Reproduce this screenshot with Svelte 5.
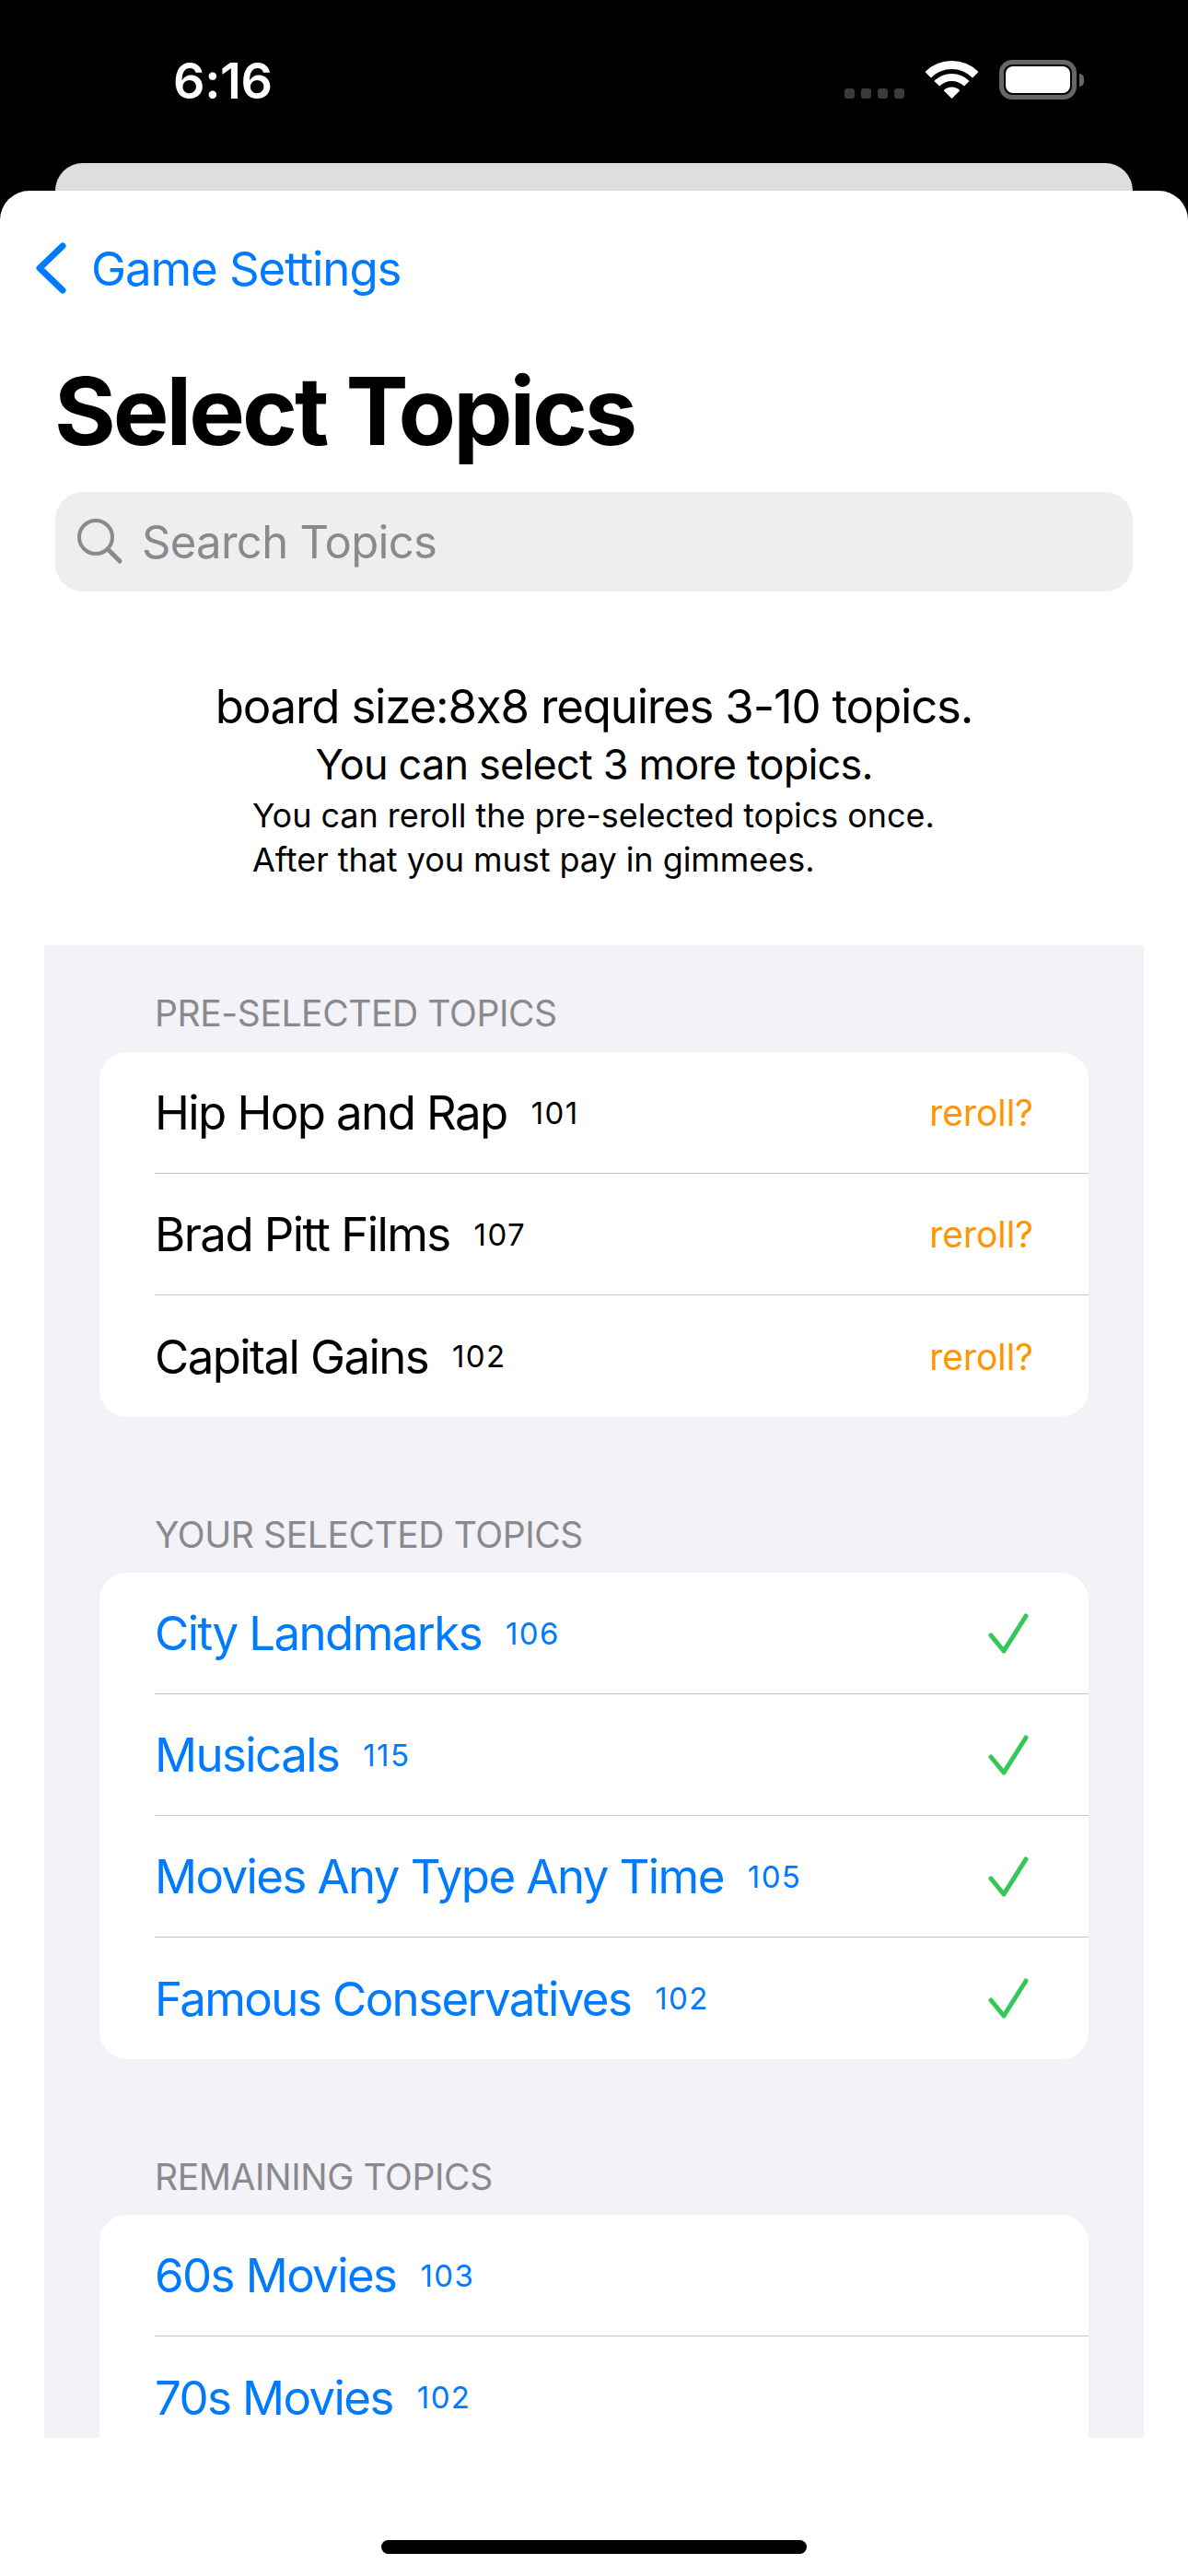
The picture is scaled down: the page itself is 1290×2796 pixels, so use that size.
<script>
  const preselected = [
    { name: 'Hip Hop and Rap', count: 101 },
    { name: 'Brad Pitt Films', count: 107 },
    { name: 'Capital Gains', count: 102 }
  ]
  const selected = [
    { name: 'City Landmarks', count: 106 },
    { name: 'Musicals', count: 115 },
    { name: 'Movies Any Type Any Time', count: 105 },
    { name: 'Famous Conservatives', count: 102 }
  ]
  const remaining = [
    { name: '60s Movies', count: 103 },
    { name: '70s Movies', count: 102 }
  ]
</script>

<div class="phone">
  <div class="status">
    <span class="time">6:16</span>
    <div class="status-icons">
      <div class="dots">
        <i></i><i></i><i></i><i></i>
      </div>
      <svg class="wifi" width="57" height="41" viewBox="0 0 57 41">
        <path fill="#fff" d="M-0.5 12 A41 41 0 0 1 57.5 12 L51.1 18.4 A32 32 0 0 0 5.9 18.4 Z" />
        <path fill="#fff" d="M9.4 21.9 A27 27 0 0 1 47.6 21.9 L41.9 27.6 A19 19 0 0 0 15.1 27.6 Z" />
        <path fill="#fff" d="M19.7 32.2 A12.5 12.5 0 0 1 37.3 32.2 L28.5 41 Z" />
      </svg>
      <div class="battery">
        <div class="battery-body"><div class="battery-fill"></div></div>
        <div class="battery-cap"></div>
      </div>
    </div>
  </div>

  <div class="back-sheet"></div>

  <div class="sheet">
    <nav class="nav">
      <svg width="33" height="56" viewBox="0 0 33 56">
        <path d="M29 4 L4 28 L29 52" fill="none" stroke="#007aff" stroke-width="7" stroke-linecap="round" stroke-linejoin="round" />
      </svg>
      <span>Game Settings</span>
    </nav>

    <h1>Select Topics</h1>

    <div class="search">
      <svg width="50" height="50" viewBox="0 0 50 50">
        <circle cx="20" cy="20" r="18" fill="none" stroke="#8a8a8e" stroke-width="4" />
        <path d="M33 33 L46 46" stroke="#8a8a8e" stroke-width="5" stroke-linecap="round" />
      </svg>
      <span>Search Topics</span>
    </div>

    <div class="intro">
      <p class="line-1">board size:8x8 requires 3-10 topics.</p>
      <p class="line-2">You can select 3 more topics.</p>
      <div class="small">
        <p>You can reroll the pre-selected topics once.</p>
        <p>After that you must pay in gimmees.</p>
      </div>
    </div>

    <div class="panel">
      <section>
        <h2>PRE-SELECTED TOPICS</h2>
        <ul class="card">
          {#each preselected as topic}
            <li>
              <span class="name">{topic.name}</span>
              <span class="count">{topic.count}</span>
              <span class="reroll">reroll?</span>
            </li>
          {/each}
        </ul>
      </section>

      <section>
        <h2>YOUR SELECTED TOPICS</h2>
        <ul class="card blue">
          {#each selected as topic}
            <li>
              <span class="name">{topic.name}</span>
              <span class="count">{topic.count}</span>
              <svg class="check" width="44" height="44" viewBox="0 0 44 44">
                <path d="M3 24 L17 41 L41 3" fill="none" stroke="#34c759" stroke-width="5" stroke-linecap="round" stroke-linejoin="round" />
              </svg>
            </li>
          {/each}
        </ul>
      </section>

      <section>
        <h2>REMAINING TOPICS</h2>
        <ul class="card blue">
          {#each remaining as topic}
            <li>
              <span class="name">{topic.name}</span>
              <span class="count">{topic.count}</span>
            </li>
          {/each}
        </ul>
      </section>
    </div>

    <div class="home-area">
      <div class="home-bar"></div>
    </div>
  </div>
</div>

<style>
  :global(body) {
    margin: 0;
    background: #000;
  }

  .phone {
    width: 1290px;
    height: 2796px;
    overflow: hidden;
    background: #000;
    font-family: 'Inter', 'Liberation Sans', sans-serif;
    color: #000;
    display: flex;
    flex-direction: column;
  }

  .status {
    height: 177px;
    flex: none;
    display: flex;
    justify-content: space-between;
    padding: 61px 113px 0 188px;
    box-sizing: border-box;
  }

  .time {
    color: #fff;
    font-size: 54px;
    font-weight: 600;
    line-height: 54px;
    letter-spacing: -0.4px;
  }

  .status-icons {
    display: flex;
    align-items: flex-end;
    height: 47px;
    padding-top: 5px;
    box-sizing: border-box;
  }

  .dots {
    display: flex;
    gap: 7px;
    margin-right: 23px;
    margin-bottom: 1px;
  }

  .dots i {
    width: 11px;
    height: 11px;
    border-radius: 3px;
    background: #3a3a3a;
  }

  .wifi {
    margin-right: 23px;
    margin-bottom: 1px;
    overflow: visible;
  }

  .battery {
    display: flex;
    align-items: center;
    gap: 3px;
  }

  .battery-body {
    width: 84px;
    height: 43px;
    box-sizing: border-box;
    border: 5px solid #666;
    border-radius: 14px;
    padding: 2px;
  }

  .battery-fill {
    height: 100%;
    background: #fff;
    border-radius: 8px;
  }

  .battery-cap {
    width: 5px;
    height: 14px;
    background: #666;
    border-radius: 0 5px 5px 0;
  }

  .back-sheet {
    height: 30px;
    flex: none;
    margin: 0 60px;
    background: #dedede;
    border-radius: 30px 30px 0 0;
  }

  .sheet {
    flex: 1;
    background: #fff;
    border-radius: 32px 32px 0 0;
    display: flex;
    flex-direction: column;
    min-height: 0;
  }

  .nav {
    height: 168px;
    flex: none;
    box-sizing: border-box;
    padding-left: 39px;
    display: flex;
    align-items: center;
    gap: 27px;
    color: #007aff;
    font-size: 51px;
    letter-spacing: -1.1px;
  }

  h1 {
    margin: 0 0 29px 59px;
    height: 130px;
    font-size: 102px;
    line-height: 142px;
    font-weight: 700;
    letter-spacing: -3px;
    flex: none;
  }

  .search {
    height: 108px;
    flex: none;
    margin: 0 60px;
    background: #eeeeef;
    border-radius: 30px;
    display: flex;
    align-items: center;
    padding-left: 24px;
    gap: 20px;
    color: #8a8a8e;
    font-size: 49px;
    letter-spacing: -0.7px;
  }

  .intro {
    height: 384px;
    flex: none;
    box-sizing: border-box;
    padding-top: 93px;
    text-align: center;
    display: flex;
    flex-direction: column;
    align-items: center;
  }

  .intro p {
    margin: 0;
  }

  .line-1 {
    font-size: 51px;
    line-height: 64px;
    letter-spacing: -1.2px;
  }

  .line-2 {
    font-size: 45px;
    line-height: 62px;
    letter-spacing: -0.8px;
  }

  .small {
    align-self: flex-start;
    margin-left: 274px;
    text-align: left;
    font-size: 36px;
    line-height: 48px;
    letter-spacing: -0.05px;
  }

  .panel {
    height: 1620px;
    flex: none;
    overflow: hidden;
    margin: 0 48px;
    padding: 0 60px;
    background: #f2f2f7;
  }

  h2 {
    margin: 0;
    height: 116px;
    box-sizing: border-box;
    padding: 50px 0 0 60px;
    font-size: 39px;
    line-height: 48px;
    font-weight: 400;
    color: #8a8a8e;
    letter-spacing: -0.4px;
  }

  section + section h2 {
    height: 169px;
    padding-top: 104px;
  }

  .card {
    margin: 0;
    padding: 0;
    list-style: none;
    background: #fff;
    border-radius: 30px;
    overflow: hidden;
  }

  .card li {
    height: 132px;
    box-sizing: border-box;
    margin-left: 60px;
    padding-right: 60px;
    display: flex;
    align-items: center;
    border-bottom: 1px solid #c6c6c8;
    font-size: 51px;
    letter-spacing: -1.6px;
  }

  .card li:last-child {
    border-bottom: 0;
  }

  .blue li {
    color: #007aff;
  }

  .count {
    margin-left: 26px;
    font-size: 33px;
    letter-spacing: 1.4px;
  }

  .reroll {
    margin-left: auto;
    color: #ff9500;
    font-size: 39px;
    letter-spacing: -0.05px;
  }

  .check {
    margin-left: auto;
    margin-right: 5px;
  }

  .home-area {
    flex: 1;
    display: flex;
    justify-content: center;
    padding-top: 111px;
  }

  .home-bar {
    width: 462px;
    height: 15px;
    border-radius: 8px;
    background: #000;
  }

  .sheet h1, .sheet p, .name {
    white-space: nowrap;
  }
</style>
